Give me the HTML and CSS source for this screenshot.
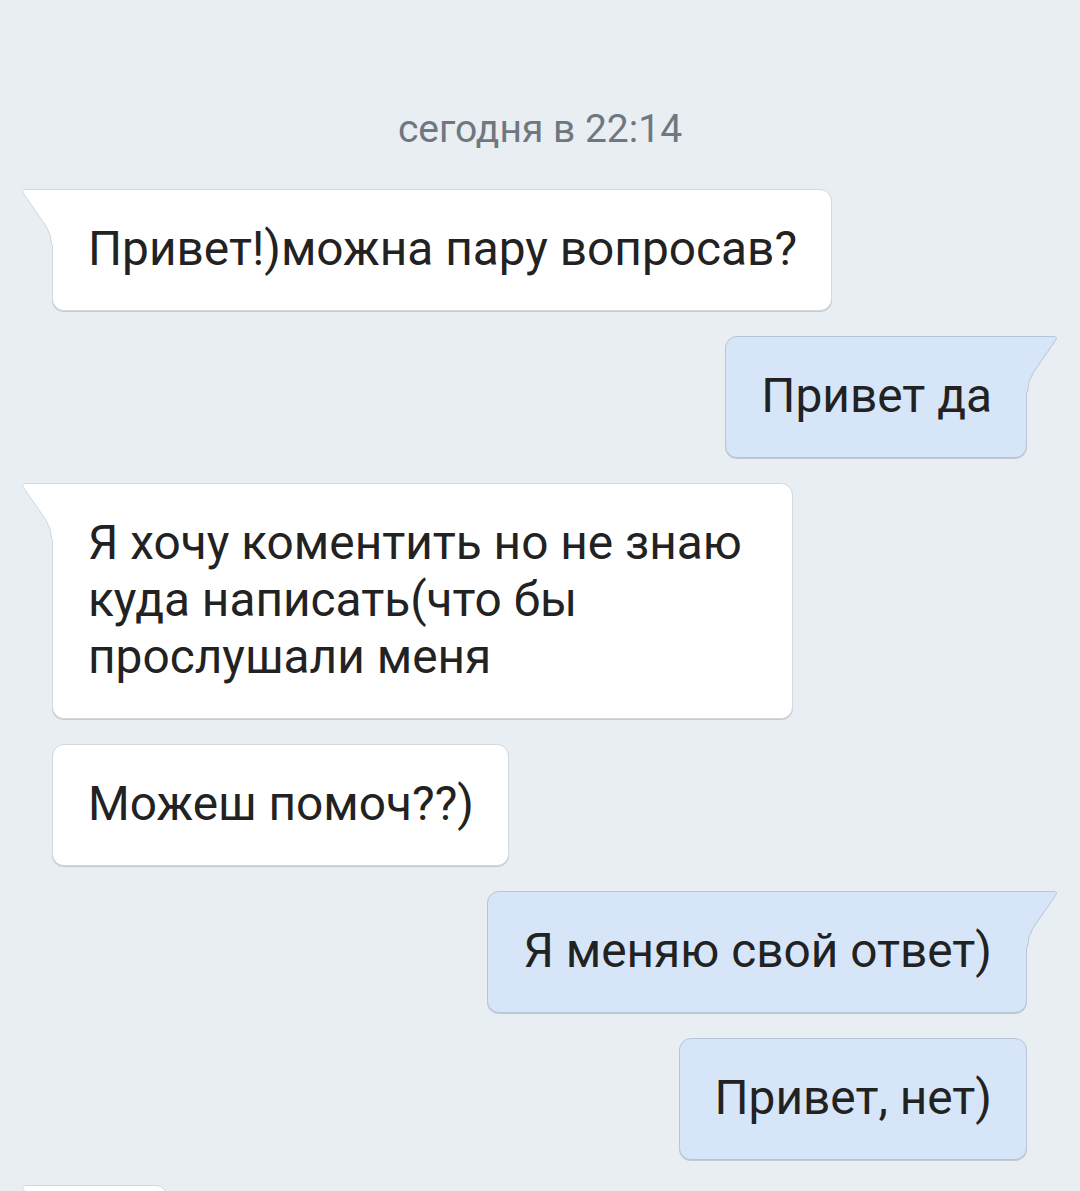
FILE: index.html
```html
<!DOCTYPE html>
<html lang="ru">

<head>
    <meta charset="UTF-8">
    <meta name="viewport" content="width=device-width, initial-scale=1.0">
    <title>Сообщения</title>
    <link rel="stylesheet" href="styles.css">
</head>

<body>
    <div class="chat">
        <div class="date">сегодня в 22:14</div>

        <div class="msg in tail">
            <svg class="tail-svg" width="32" height="56" viewBox="0 0 32 56">
                <path class="tail-fill" d="M32 1 H4 Q0 1 2.5 4.5 L25 37 Q31 46 31 56 H32 Z" />
                <path class="tail-line" d="M32 0.5 H4 Q0 0.5 2.5 4.5 L25 37 Q30.5 46 30.5 56" />
            </svg>
            Привет!)можна пару вопросав?
        </div>

        <div class="msg out tail">
            <svg class="tail-svg" width="32" height="56" viewBox="0 0 32 56">
                <path class="tail-fill" d="M0 1 H28 Q32 1 29.5 4.5 L7 37 Q1 46 1 56 H0 Z" />
                <path class="tail-line" d="M0 0.5 H28 Q32 0.5 29.5 4.5 L7 37 Q1.5 46 1.5 56" />
            </svg>
            Привет да
        </div>

        <div class="msg in tail wide">
            <svg class="tail-svg" width="32" height="56" viewBox="0 0 32 56">
                <path class="tail-fill" d="M32 1 H4 Q0 1 2.5 4.5 L25 37 Q31 46 31 56 H32 Z" />
                <path class="tail-line" d="M32 0.5 H4 Q0 0.5 2.5 4.5 L25 37 Q30.5 46 30.5 56" />
            </svg>
            Я хочу коментить но не знаю куда написать(что бы прослушали меня
        </div>

        <div class="msg in">Можеш помоч??)</div>

        <div class="msg out tail">
            <svg class="tail-svg" width="32" height="56" viewBox="0 0 32 56">
                <path class="tail-fill" d="M0 1 H28 Q32 1 29.5 4.5 L7 37 Q1 46 1 56 H0 Z" />
                <path class="tail-line" d="M0 0.5 H28 Q32 0.5 29.5 4.5 L7 37 Q1.5 46 1.5 56" />
            </svg>
            Я меняю свой ответ)
        </div>

        <div class="msg out">Привет, нет)</div>

        <div class="msg in tail next">
            <svg class="tail-svg" width="32" height="56" viewBox="0 0 32 56">
                <path class="tail-fill" d="M32 1 H4 Q0 1 2.5 4.5 L25 37 Q31 46 31 56 H32 Z" />
                <path class="tail-line" d="M32 0.5 H4 Q0 0.5 2.5 4.5 L25 37 Q30.5 46 30.5 56" />
            </svg>
        </div>
    </div>
</body>

</html>
```

FILE: styles.css
```css
body {
    margin: 0;
    padding: 0;
    height: 1191px;
    overflow: hidden;
    background-color: #e9eef3;
    font-family: Roboto, "Noto Sans", sans-serif;
}

.chat {
    display: flex;
    flex-direction: column;
    gap: 25px;
    padding: 106px 53px 0 52px;
}

.date {
    align-self: center;
    font-size: 39px;
    line-height: 46px;
    color: #6f7780;
    margin-bottom: 12px;
    margin-left: 1px;
}

.msg {
    position: relative;
    box-sizing: border-box;
    padding: 31px 34px 32px 35px;
    font-size: 47.8px;
    line-height: 57px;
    color: #222;
    border-radius: 12px;
    border: 1px solid;
    box-shadow: 0 1px 0 rgba(120, 135, 150, 0.35);
}

.msg.in {
    align-self: flex-start;
    background-color: #fff;
    border-color: #d3d8dd;
}

.msg.out {
    align-self: flex-end;
    background-color: #d6e6f8;
    border-color: #b7c6d6;
}

.msg.wide {
    width: 741px;
}

.msg.next {
    width: 116px;
    height: 122px;
}

.msg.in.tail {
    border-top-left-radius: 0;
}

.msg.out.tail {
    border-top-right-radius: 0;
}

.tail-svg {
    position: absolute;
    top: -1px;
}

.msg.in .tail-svg {
    left: -32px;
}

.msg.out .tail-svg {
    right: -32px;
}

.msg.in .tail-fill {
    fill: #fff;
}

.msg.out .tail-fill {
    fill: #d6e6f8;
}

.tail-line {
    fill: none;
    stroke-width: 1;
}

.msg.in .tail-line {
    stroke: #d3d8dd;
}

.msg.out .tail-line {
    stroke: #b7c6d6;
}
```
